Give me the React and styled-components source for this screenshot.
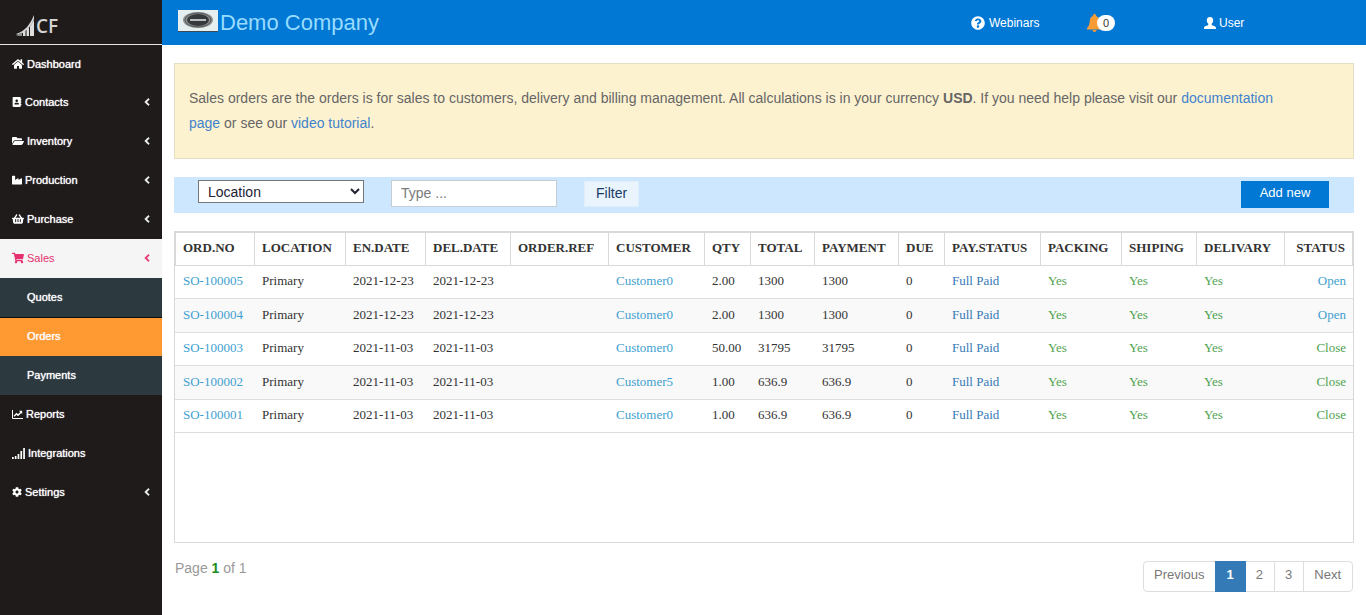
import React from "react";
import styled, { createGlobalStyle } from "styled-components";
import {
  FaHome,
  FaAddressBook,
  FaFolderOpen,
  FaIndustry,
  FaShoppingBasket,
  FaShoppingCart,
  FaCog,
  FaChevronLeft,
  FaQuestionCircle,
} from "react-icons/fa";

const GlobalStyle = createGlobalStyle`
  *, *::before, *::after { box-sizing: border-box; }
  body {
    margin: 0;
    background: #fff;
    font-family: "Liberation Sans", Arial, sans-serif;
    font-size: 14px;
    color: #555;
  }
  a { color: inherit; text-decoration: none; }
  button, input, select { font: inherit; margin: 0; }
  ul { list-style: none; margin: 0; padding: 0; }
`;

const Shell = styled.div`
  display: flex;
  min-height: 100vh;
`;

const Sidebar = styled.aside`
  flex: 0 0 162px;
  background: #1e1b1a;
  color: #fff;
`;

const Brand = styled.a`
  display: flex;
  align-items: flex-end;
  height: 44px;
  padding: 0 0 8px 16px;
`;

const BrandText = styled.span`
  font-family: "Open Sans", "Noto Sans", sans-serif;
  font-size: 19px;
  font-weight: 600;
  line-height: 19px;
  color: #d3d3d3;
`;

const NavLink = styled.a`
  display: flex;
  align-items: center;
  gap: 3px;
  height: 39px;
  padding: 0 11px 2px 12px;
  border-top: 1px solid transparent;
  font-size: 11px;
  text-shadow: 0 0 1px currentColor;
  svg { flex: none; }
`;

const FirstLink = styled(NavLink)`
  padding-bottom: 0;
  border-top-color: #e6e6e6;
`;

const OpenLink = styled(NavLink)`
  background: #f5f5f5;
  border-top-color: #f5f5f5;
  color: #e5316f;
  text-shadow: none;
`;

const SubLink = styled(NavLink)`
  padding-left: 27px;
  background: ${(p) => (p.$active ? "#ff9a33" : "#2c3a40")};
  border-top-color: ${(p) => (p.$active ? "#0c0c0c" : "#2c3a40")};
`;

const Arrow = styled(FaChevronLeft).attrs({ size: 8 })`
  margin-left: auto;
  stroke: currentColor;
  stroke-width: 50;
`;

const Main = styled.div`
  flex: 1;
  min-width: 0;
  display: flex;
  flex-direction: column;
`;

const TopBar = styled.header`
  display: flex;
  align-items: center;
  justify-content: space-between;
  height: 45px;
  padding: 0 12px 0 16px;
  background: #0078d4;
`;

const Company = styled.div`
  display: flex;
  align-items: center;
  gap: 2px;
  font-size: 22px;
  color: #98dcff;
  svg { margin-bottom: 4px; }
`;

const TopMenu = styled.nav`
  display: grid;
  grid-template-columns: 116px 117px 150px;
  align-items: center;
  font-size: 12px;
  color: #fff;
`;

const TopLink = styled.a`
  display: flex;
  align-items: center;
  gap: ${(p) => p.$gap || 0}px;
`;

const Count = styled.span`
  width: 18px;
  margin-left: -5px;
  border-radius: 8px;
  background: #fff;
  color: #333;
  font-size: 11px;
  line-height: 16px;
  text-align: center;
  z-index: 1;
`;

const Content = styled.main`
  flex: 1;
  display: flex;
  flex-direction: column;
  padding: 18px 12px 23px;
`;

const Notice = styled.p`
  margin: 0;
  padding: 22px 48px 22px 14px;
  border: 1px solid #e2dfc4;
  background: #fdf2d0;
  line-height: 25px;
  color: #666;
  a { color: #4283cc; }
`;

const Toolbar = styled.form`
  display: flex;
  align-items: flex-start;
  gap: 27px;
  height: 36px;
  margin-top: 18px;
  padding: 3px 25px 0 24px;
  background: #cce7fe;
`;

const LocationSelect = styled.select`
  width: 166px;
  height: 23px;
  padding: 0 0 0 5px;
  border: 1px solid #767676;
  border-radius: 0;
  background: #fff;
  color: #223;
`;

const SearchInput = styled.input`
  width: 166px;
  height: 27px;
  padding: 0 9px 2px;
  border: 1px solid #c4ccd4;
  background: #fff;
  &::placeholder { color: #7a7a7a; }
`;

const FilterButton = styled.button`
  height: 26px;
  margin-top: 1px;
  padding: 0 11px 2px;
  border: 1px solid #dfeefa;
  background: #e9f4fd;
  color: #1b3a66;
`;

const AddButton = styled.button`
  width: 88px;
  height: 27px;
  margin: 1px 0 0 auto;
  padding: 0 0 4px;
  border: 0;
  background: #0078d4;
  color: #fff;
  font-size: 13px;
`;

const Panel = styled.section`
  flex: 1;
  margin-top: 18px;
  border: 1px solid #d9d9d9;
`;

const Table = styled.table`
  width: 100%;
  table-layout: fixed;
  border-collapse: separate;
  border-spacing: 0;
  font-family: "Liberation Serif", "Times New Roman", serif;
  font-size: 13px;
  line-height: 16px;
  color: #333;
  white-space: nowrap;
  th, td { text-align: left; }
  th:last-child, td:last-child { text-align: right; }
  th {
    height: 34px;
    padding: 0 7px 2px;
    border: solid #d9d9d9;
    border-width: 1px 0 1px 1px;
  }
  th:last-child { border-right-width: 1px; padding-left: 0; }
  td {
    height: 33px;
    padding: 0 7px 2px 8px;
    border-bottom: 1px solid #ddd;
  }
  tbody tr:nth-child(even) td {
    height: 34px;
    background: #f9f9f9;
  }
`;

const CellLink = styled.a`
  color: ${(p) => p.$color};
`;

const Footer = styled.footer`
  display: flex;
  justify-content: space-between;
  align-items: flex-start;
  margin-top: 18px;
`;

const PageInfo = styled.p`
  margin: 0;
  padding-left: 1px;
  line-height: 14px;
  color: #999;
  b { color: #1c8a1c; }
`;

const Pager = styled.nav`
  display: flex;
  margin-right: 1px;
  border: 1px solid #ddd;
  border-radius: 4px;
`;

const PageButton = styled.button`
  height: 29px;
  padding: 0 11px 4px 10px;
  border: 0;
  border-left: 1px solid #ddd;
  background: transparent;
  color: #777;
  font-size: 13px;
  &:first-child { border-left: 0; padding-right: 10px; }
  &[aria-current] {
    height: 31px;
    margin: -1px 0;
    padding: 0 12px 4px;
    border-left: 0;
    background: #337ab7;
    color: #fff;
    font-weight: bold;
    & + button { border-left: 0; }
  }
`;

const BrandMark = () => (
  <svg width="20" height="21" viewBox="0 0 20 21" aria-hidden="true">
    <path d="M0 19C9 16 14 10 18 0V4C16 10 11 16 3 20Z" fill="#d6d6d6" />
    <path d="M7 17L9.500 15.500V21H7ZM10.500 14.500L13 12.500V21H10.500ZM14 11.500L18 5V21H14Z" fill="#dedede" />
    <path d="M0 20L6 17.500V21H2Z" fill="#8b8b8b" />
  </svg>
);

const CompanyLogo = () => (
  <svg width="40" height="22" viewBox="0 0 40 22" aria-hidden="true">
    <rect width="40" height="22" fill="#e6eff0" />
    <rect y="21" width="40" height="1" fill="#3b4a54" />
    <ellipse cx="20" cy="10" rx="15" ry="8" fill="#8d9192" />
    <ellipse cx="20" cy="10" rx="13" ry="7" fill="none" stroke="#555" />
    <ellipse cx="20" cy="10" rx="11" ry="6" fill="#35393b" />
    <rect x="12" y="9" width="16" height="2" fill="#b9bcbd" />
  </svg>
);

const BellIcon = () => (
  <svg width="15" height="18" viewBox="0 0 15 18" fill="#f89c35" aria-hidden="true">
    <path d="M7.500 0C8.300 0 9 .6 9 1.400V2C11.200 2.600 12 4.500 12.200 6.500C12.500 10 13 12.500 15 14V15.500H0V14C2 12.500 2.500 10 2.800 6.500C3 4.500 3.800 2.600 6 2V1.400C6 .6 6.700 0 7.500 0ZM5.500 16H9.500C9.500 18.600 5.500 18.600 5.500 16Z" />
  </svg>
);

const UserIcon = () => (
  <svg width="12" height="12" viewBox="0 0 12 12" fill="#fff" aria-hidden="true">
    <path d="M6 0C8.300 0 9.200 1.300 9.200 3.200C9.200 5 8.300 6 7.700 6.800V8C8.500 8.700 12 9 12 11V12H0V11C0 9 3.500 8.700 4.300 8V6.800C3.700 6 2.800 5 2.800 3.200C2.800 1.300 3.700 0 6 0Z" />
  </svg>
);

const ReportIcon = () => (
  <svg width="11" height="9" viewBox="0 0 11 9" fill="none" stroke="currentColor" aria-hidden="true">
    <path d="M.5 0V8.500H11" />
    <path d="M2 6.200L4.500 3.700L6 5.200L9.300 1.900" strokeWidth="1.400" />
    <path d="M7 .8H10.200V4Z" fill="currentColor" stroke="none" />
  </svg>
);

const SignalIcon = () => (
  <svg width="13" height="11" viewBox="0 0 13 11" fill="currentColor" aria-hidden="true">
    <path d="M0 9H1.700V11H0ZM2.800 8H4.500V11H2.800ZM5.600 6H7.300V11H5.600ZM8.400 3H10.100V11H8.400ZM11.200 0H12.900V11H11.200Z" />
  </svg>
);

const COLUMNS = [
  ["ORD.NO", 79],
  ["LOCATION", 91],
  ["EN.DATE", 80],
  ["DEL.DATE", 85],
  ["ORDER.REF", 98],
  ["CUSTOMER", 96],
  ["QTY", 46],
  ["TOTAL", 64],
  ["PAYMENT", 84],
  ["DUE", 46],
  ["PAY.STATUS", 96],
  ["PACKING", 81],
  ["SHIPING", 75],
  ["DELIVARY", 88],
  ["STATUS", 69],
];

const ORDERS = [
  { no: "SO-100005", date: "2021-12-23", customer: "Customer0", qty: "2.00", total: "1300", status: "Open" },
  { no: "SO-100004", date: "2021-12-23", customer: "Customer0", qty: "2.00", total: "1300", status: "Open" },
  { no: "SO-100003", date: "2021-11-03", customer: "Customer0", qty: "50.00", total: "31795", status: "Close" },
  { no: "SO-100002", date: "2021-11-03", customer: "Customer5", qty: "1.00", total: "636.9", status: "Close" },
  { no: "SO-100001", date: "2021-11-03", customer: "Customer0", qty: "1.00", total: "636.9", status: "Close" },
];

const BLUE = "#419fd0";
const DARK_BLUE = "#337ab7";
const GREEN = "#4fa34f";

export default function App() {
  return (
    <>
      <GlobalStyle />
      <Shell>
        <Sidebar>
          <Brand href="#">
            <BrandMark />
            <BrandText>CF</BrandText>
          </Brand>
          <nav>
            <FirstLink href="#"><FaHome size={12} />Dashboard</FirstLink>
            <NavLink href="#"><FaAddressBook size={10} />Contacts<Arrow /></NavLink>
            <NavLink href="#"><FaFolderOpen size={12} />Inventory<Arrow /></NavLink>
            <NavLink href="#"><FaIndustry size={10} />Production<Arrow /></NavLink>
            <NavLink href="#"><FaShoppingBasket size={12} />Purchase<Arrow /></NavLink>
            <OpenLink href="#"><FaShoppingCart size={12} />Sales<Arrow /></OpenLink>
            <SubLink href="#">Quotes</SubLink>
            <SubLink href="#" $active>Orders</SubLink>
            <SubLink href="#">Payments</SubLink>
            <NavLink href="#"><ReportIcon />Reports</NavLink>
            <NavLink href="#"><SignalIcon />Integrations</NavLink>
            <NavLink href="#"><FaCog size={10} />Settings<Arrow /></NavLink>
          </nav>
        </Sidebar>
        <Main>
          <TopBar>
            <Company><CompanyLogo />Demo Company</Company>
            <TopMenu>
              <TopLink href="#" $gap={4}><FaQuestionCircle size={14} />Webinars</TopLink>
              <TopLink href="#"><BellIcon /><Count>0</Count></TopLink>
              <TopLink href="#" $gap={3}><UserIcon />User</TopLink>
            </TopMenu>
          </TopBar>
          <Content>
            <Notice>
              Sales orders are the orders is for sales to customers, delivery and billing management. All calculations
              is in your currency <b>USD</b>. If you need help please visit our <a href="#">documentation page</a> or
              see our <a href="#">video tutorial</a>.
            </Notice>
            <Toolbar onSubmit={(e) => e.preventDefault()}>
              <LocationSelect aria-label="Location"><option>Location</option></LocationSelect>
              <SearchInput type="text" placeholder="Type ..." aria-label="Search orders" />
              <FilterButton type="submit">Filter</FilterButton>
              <AddButton type="button">Add new</AddButton>
            </Toolbar>
            <Panel>
              <Table>
                <colgroup>
                  {COLUMNS.map(([name, width]) => <col key={name} width={width} />)}
                </colgroup>
                <thead>
                  <tr>{COLUMNS.map(([name]) => <th key={name} scope="col">{name}</th>)}</tr>
                </thead>
                <tbody>
                  {ORDERS.map((o) => (
                    <tr key={o.no}>
                      <td><CellLink href="#" $color={BLUE}>{o.no}</CellLink></td>
                      <td>Primary</td>
                      <td>{o.date}</td>
                      <td>{o.date}</td>
                      <td />
                      <td><CellLink href="#" $color={BLUE}>{o.customer}</CellLink></td>
                      <td>{o.qty}</td>
                      <td>{o.total}</td>
                      <td>{o.total}</td>
                      <td>0</td>
                      <td><CellLink href="#" $color={DARK_BLUE}>Full Paid</CellLink></td>
                      <td><CellLink href="#" $color={GREEN}>Yes</CellLink></td>
                      <td><CellLink href="#" $color={GREEN}>Yes</CellLink></td>
                      <td><CellLink href="#" $color={GREEN}>Yes</CellLink></td>
                      <td><CellLink href="#" $color={o.status === "Open" ? BLUE : GREEN}>{o.status}</CellLink></td>
                    </tr>
                  ))}
                </tbody>
              </Table>
            </Panel>
            <Footer>
              <PageInfo>Page <b>1</b> of 1</PageInfo>
              <Pager aria-label="Pagination">
                <PageButton>Previous</PageButton>
                <PageButton aria-current="page">1</PageButton>
                <PageButton>2</PageButton>
                <PageButton>3</PageButton>
                <PageButton>Next</PageButton>
              </Pager>
            </Footer>
          </Content>
        </Main>
      </Shell>
    </>
  );
}
